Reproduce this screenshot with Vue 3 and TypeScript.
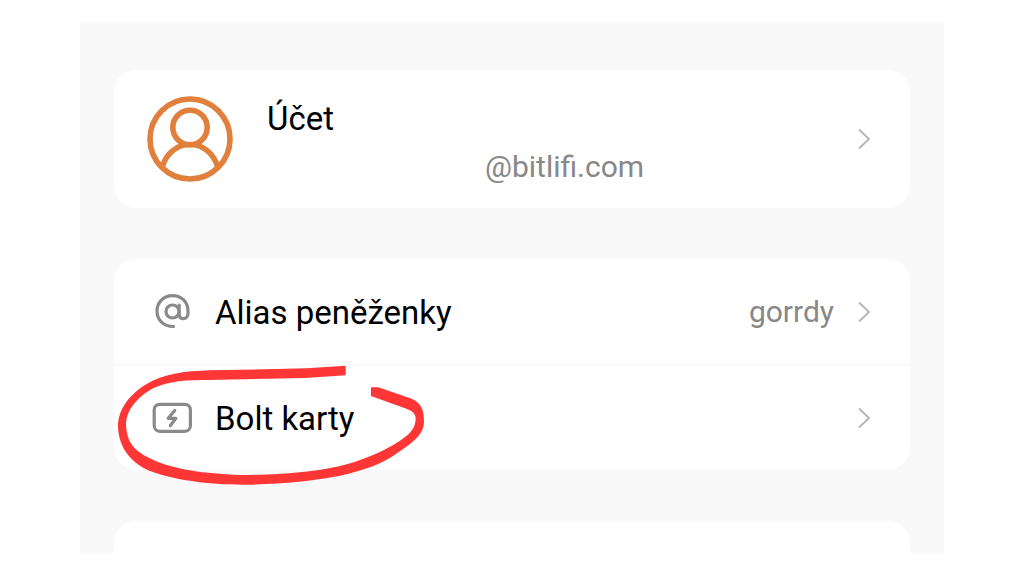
<script setup lang="ts">
interface SettingRow {
  id: string
  label: string
  value?: string
}

const rows: SettingRow[] = [
  { id: 'alias', label: 'Alias peněženky', value: 'gorrdy' },
  { id: 'bolt', label: 'Bolt karty' },
]
</script>

<template>
  <main class="page">
    <div class="panel">
      <button type="button" class="card account">
        <svg class="avatar" viewBox="0 0 86 86" aria-hidden="true">
          <circle cx="43" cy="43" r="40" />
          <circle cx="43" cy="31.500" r="17.200" />
          <path d="M15.500 70C20 57 30 48.500 43 48.500S66 57 70.500 70" />
        </svg>
        <span class="identity">
          <span class="label">Účet</span>
          <span class="value email">@bitlifi.com</span>
        </span>
        <svg class="chevron" viewBox="0 0 14 22" aria-hidden="true">
          <path d="M2 1.500L12 11L2 20.500" />
        </svg>
      </button>

      <div class="card list">
        <button v-for="row in rows" :key="row.id" type="button" class="row">
          <svg v-if="row.id === 'alias'" class="icon" viewBox="0 0 40 36" aria-hidden="true">
            <circle cx="20.500" cy="17.500" r="6.500" />
            <path d="M27.200 11V20C27.200 23 29 24.700 31.300 24.700C34 24.700 36 22.500 36 19.500V17C36 8 29.500 1.700 20.500 1.700C11.500 1.700 5 8.500 5 17C5 26 11.500 32.300 21.500 32.500" />
          </svg>
          <svg v-else class="icon" viewBox="0 0 40 36" aria-hidden="true">
            <rect x="2.200" y="4.300" width="36.200" height="27" rx="5.500" />
            <path d="M22.800 10.500L16.200 18.300H23.900L18.300 25.700" />
          </svg>
          <span class="label">{{ row.label }}</span>
          <span v-if="row.value" class="value">{{ row.value }}</span>
          <svg class="chevron" viewBox="0 0 14 22" aria-hidden="true">
            <path d="M2 1.500L12 11L2 20.500" />
          </svg>
        </button>
        <svg class="marker" viewBox="0 0 1050 420" aria-hidden="true">
          <path
            d="M737 32L620 40L330 46C250 48 190 58 140 87C85 120 54 165 54 215C56 270 85 320 150 348C220 375 330 390 440 389C540 387 640 378 720 362C800 345 850 325 895 292C945 258 972 235 972 200C972 165 965 145 935 131L835 97L813 97L813 123L915 160C935 167 947 175 947 190C947 215 935 235 900 257C850 290 790 315 720 333C640 350 560 359 420 360C310 355 230 345 160 315C105 290 79 265 78 205C80 165 110 130 150 105C190 83 240 74 320 75L615 69L737 61Z"
          />
        </svg>
      </div>

      <div class="card next"></div>
    </div>
  </main>
</template>

<style>
body {
  margin: 0;
  background: #fff;
}
</style>

<style scoped>
.page {
  display: flex;
  flex-direction: column;
  box-sizing: border-box;
  min-height: 100vh;
  padding: 23px 80px;
  font-family: Roboto, "Liberation Sans", sans-serif;
}

.panel {
  display: flex;
  flex: 1;
  flex-direction: column;
  gap: 51px;
  padding: 47px 34px 0;
  background: #f9f9f9;
}

.card {
  border-radius: 22px;
  background: #fff;
}

button {
  display: flex;
  align-items: center;
  box-sizing: border-box;
  width: 100%;
  margin: 0;
  border: 0;
  background: none;
  color: #000;
  font: inherit;
  text-align: left;
  cursor: pointer;
}

.account {
  gap: 34px;
  padding: 26px 39px 22px 33px;
}

.avatar {
  flex: none;
  width: 86px;
  height: 86px;
  margin-bottom: 4px;
  fill: none;
  stroke: #e0803c;
  stroke-width: 5.6;
}

.identity {
  display: flex;
  flex: 1;
  flex-direction: column;
  gap: 10px;
}

.label {
  padding-top: 2px;
  font-size: 33px;
  line-height: 40px;
}

.value {
  color: #888;
  font-size: 30px;
  line-height: 36px;
}

.email {
  padding-left: 218px;
}

.list {
  position: relative;
}

.row {
  gap: 23px;
  padding: 32px 39px 31px 38px;
}

.row + .row {
  border-top: 1px solid #f4f4f4;
}

.row .label {
  flex: 1;
}

.icon {
  flex: none;
  width: 40px;
  height: 36px;
  fill: none;
  stroke: #8a8a8a;
  stroke-width: 3.2;
  stroke-linecap: round;
  stroke-linejoin: round;
}

.chevron {
  flex: none;
  width: 14px;
  height: 22px;
  fill: none;
  stroke: #b4b4b4;
  stroke-width: 1.8;
}

.account .chevron {
  margin-bottom: 4px;
}

.marker {
  position: absolute;
  top: 96px;
  left: -14px;
  width: 350px;
  height: 140px;
  fill: #fe3636;
  pointer-events: none;
}

.next {
  flex: 1;
  min-height: 32px;
  border-radius: 22px 22px 0 0;
}
</style>
